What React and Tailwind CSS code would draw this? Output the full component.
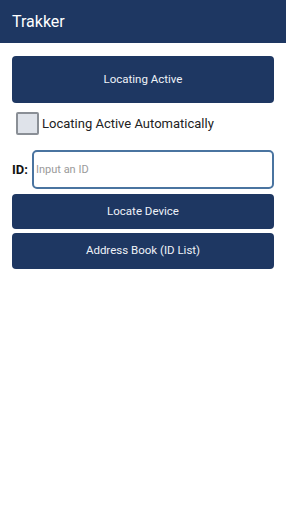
import React, { useState } from "react";

const App = () => {
  const [auto, setAuto] = useState(false);
  const [deviceId, setDeviceId] = useState("");

  return (
    <div className="min-h-[508px] bg-white" style={{ fontFamily: "Roboto, 'Noto Sans', sans-serif" }}>
      <header className="h-[43px] bg-[#1e3762] flex items-center px-3">
        <h1 className="text-[16px] text-white leading-none">Trakker</h1>
      </header>

      <div className="px-3 pt-[13px] flex flex-col">
        <button
          type="button"
          className="h-[47px] w-full rounded-[4px] bg-[#1e3762] text-[#eef2f8] text-[11.5px]"
        >
          Locating Active
        </button>

        <label className="mt-[9px] flex items-center gap-[3px] pl-1 text-[13px] text-[#222]">
          <input
            type="checkbox"
            checked={auto}
            onChange={(e) => setAuto(e.target.checked)}
            className="appearance-none h-[23px] w-[23px] rounded-[2px] border-2 border-[#8a8f96] bg-[#dfe3ea]"
          />
          Locating Active Automatically
        </label>

        <div className="mt-[15px] flex items-center gap-[4px]">
          <span className="text-[13px] font-bold text-[#111] w-[16px]">ID:</span>
          <input
            value={deviceId}
            onChange={(e) => setDeviceId(e.target.value)}
            placeholder="Input an ID"
            className="h-[39px] flex-1 rounded-[5px] border-2 border-[#4a74a0] px-[2px] text-[11px] text-[#222] placeholder:text-[#9a9a9a] outline-none"
          />
        </div>

        <button
          type="button"
          className="mt-[5px] h-[35px] w-full rounded-[4px] bg-[#1e3762] text-[#eef2f8] text-[11.5px]"
        >
          Locate Device
        </button>
        <button
          type="button"
          className="mt-[4px] h-[36px] w-full rounded-[4px] bg-[#1e3762] text-[#eef2f8] text-[11.5px]"
        >
          Address Book (ID List)
        </button>
      </div>
    </div>
  );
};

export default App;
